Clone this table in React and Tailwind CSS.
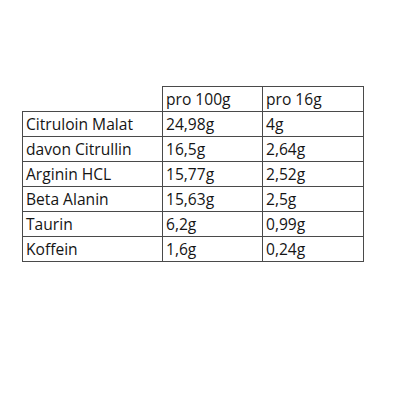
const rows = [
  ['Citruloin Malat', '24,98g', '4g'],
  ['davon Citrullin', '16,5g', '2,64g'],
  ['Arginin HCL', '15,77g', '2,52g'],
  ['Beta Alanin', '15,63g', '2,5g'],
  ['Taurin', '6,2g', '0,99g'],
  ['Koffein', '1,6g', '0,24g'],
];

export default function App() {
  const cell = 'border border-[#4a4a4a] h-[25px] px-[3px] pt-[1px] pb-0 text-left align-middle font-normal';
  return (
    <div className="w-[400px] h-[400px] bg-white pt-[86px] pl-[22px] text-[#151515] text-[15.6px] leading-none" style={{ fontFamily: '"Open Sans", "Liberation Sans", sans-serif' }}>
      <table className="border-collapse">
        <thead>
          <tr>
            <th className="w-[140px] h-[25px] p-0"></th>
            <th className={`${cell} w-[100px]`}>pro 100g</th>
            <th className={`${cell} w-[101px]`}>pro 16g</th>
          </tr>
        </thead>
        <tbody>
          {rows.map((r) => (
            <tr key={r[0]}>
              <td className={cell}>{r[0]}</td>
              <td className={cell}>{r[1]}</td>
              <td className={cell}>{r[2]}</td>
            </tr>
          ))}
        </tbody>
      </table>
    </div>
  );
}
